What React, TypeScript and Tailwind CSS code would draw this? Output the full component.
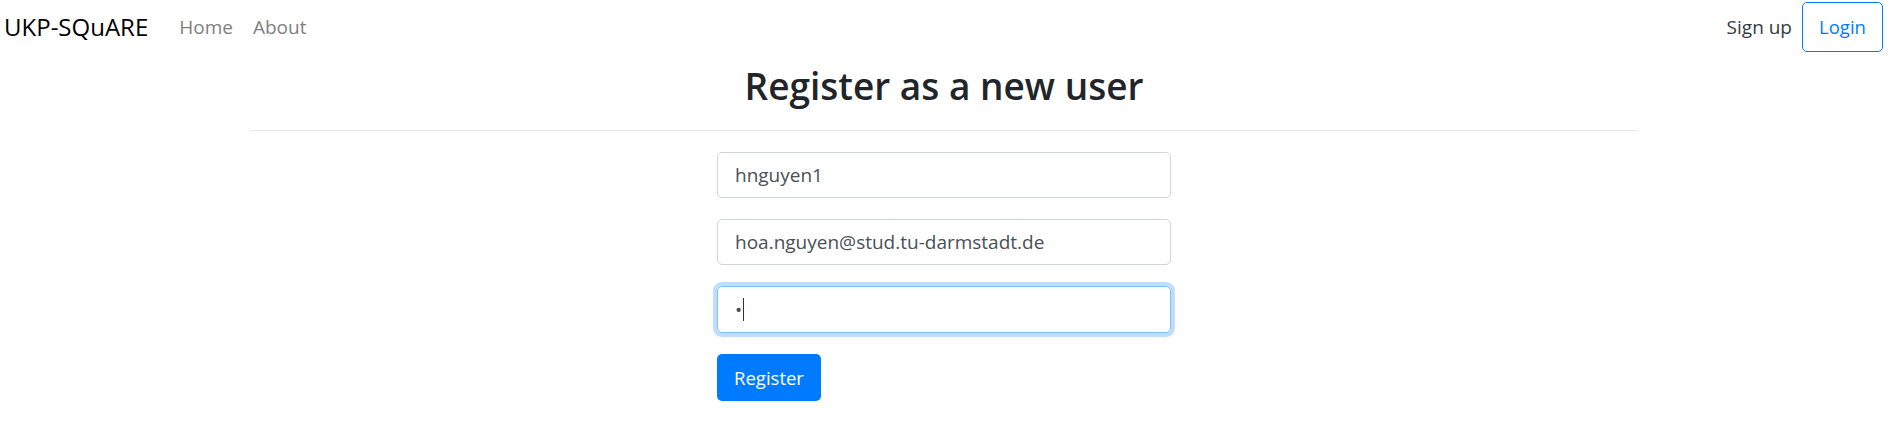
// Register page — navbar + centered sign-up form
import React from "react";

const FONT = "font-['Open_Sans','Noto_Sans',sans-serif]";

export default function App() {
  return (
    <div className={`${FONT} bg-white text-[#212529] w-[1896px] min-h-[446px]`}>
      {/* navbar */}
      <nav className="flex items-center justify-between h-[54px] pl-[4px] pr-[13px]">
        <div className="flex items-center">
          <span className="text-[24px] text-black">UKP-SQuARE</span>
          <div className="flex items-center gap-[20px] ml-[31px] text-[19px] text-[#808080]">
            <a>Home</a>
            <a>About</a>
          </div>
        </div>
        <div className="flex items-center gap-[10px]">
          <span className="text-[19px] text-[#343a40]">Sign up</span>
          <button className="w-[81px] h-[50px] border border-[#007bff] rounded-[5px] text-[18.5px] text-[#007bff]">
            Login
          </button>
        </div>
      </nav>

      {/* content */}
      <div className="w-[1388px] mx-auto -translate-x-[4px]">
        <h1 className="text-center text-[37px] font-semibold leading-[1.2] mt-[10px]">
          Register as a new user
        </h1>
        <hr className="border-t border-[#e5e5e5] mt-[22px]" />

        <form className="w-[454px] mx-auto mt-[21px] flex flex-col gap-[21px]">
          <input
            readOnly
            value="hnguyen1"
            className="h-[46px] px-[17px] border border-[#ced4da] rounded-[5px] text-[19px] text-[#495057] outline-none"
          />
          <input
            readOnly
            value="hoa.nguyen@stud.tu-darmstadt.de"
            className="h-[46px] px-[17px] border border-[#ced4da] rounded-[5px] text-[19px] text-[#495057] outline-none"
          />
          <div className="h-[47px] px-[17px] border border-[#80bdff] rounded-[5px] shadow-[0_0_0_4px_rgba(0,123,255,0.25)] flex items-center text-[19px] text-[#495057]">
            <span>•</span>
            <span className="w-px h-[23px] bg-[#333] ml-[1px]" />
          </div>
          <div>
            <button
              type="button"
              className="w-[104px] h-[47px] bg-[#007bff] rounded-[5px] text-white text-[18.5px]"
            >
              Register
            </button>
          </div>
        </form>
      </div>
    </div>
  );
}
